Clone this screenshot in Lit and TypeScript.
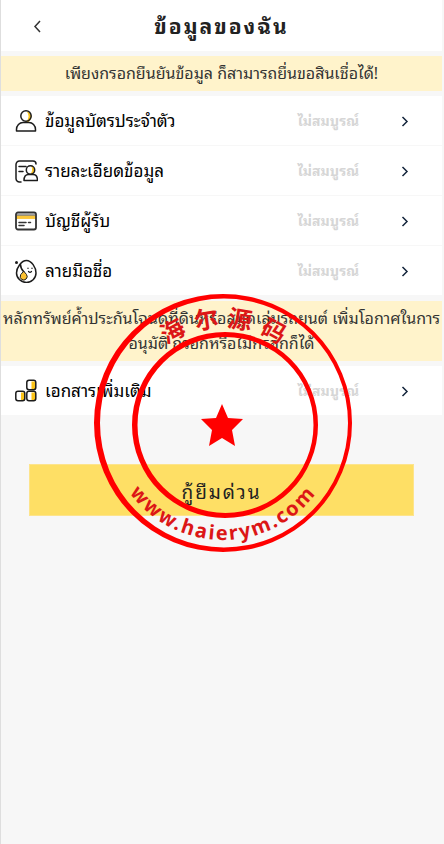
import { LitElement, html, svg, css } from "lit";
import { customElement } from "lit/decorators.js";

const icons: Record<string, unknown> = {
  person: svg`
    <path d="M13 2.500a5 5 0 0 1-2.500 9.500c3.500-1.500 4.500-6 2.500-9.500z" fill="#fcc419" stroke="#fcc419" stroke-width="1"/>
    <circle cx="11" cy="6" r="5.200"/>
    <path d="M1.500 21v-1.500c0-4 3-7 6.500-7h6c3.500 0 6.500 3 6.500 7v1.500z"/>`,
  details: svg`
    <path d="M6 22H4.500A3.500 3.500 0 0 1 1 18.500v-14A3.500 3.500 0 0 1 4.500 1H18a3 3 0 0 1 3 3"/>
    <path d="M4 6.500h7M4 11.500h4"/>
    <path d="M17 6.500a4 4 0 0 1-1 7.500c2-2.500 2-5 1-7.500z" fill="#fcc419" stroke="#fcc419" stroke-width="1"/>
    <circle cx="15.500" cy="10" r="4.200"/>
    <path d="M9 20.500c0-4 2-6 4.500-6h4.500c2.500 0 4.500 2 4.500 6z"/>`,
  card: svg`
    <path d="M1 7.200h20" stroke="#fcc73a" stroke-width="3.500" stroke-linecap="butt"/>
    <rect x="1" y="2.500" width="20" height="17" rx="2" stroke="#333" stroke-width="1.800"/>
    <path d="M2 5h18" stroke="#444" stroke-width="1"/>
    <path d="M4 12.500h7M13.500 12.500h2M4 15.500h5" stroke="#333"/>`,
  egg: svg`
    <path d="M11.500 .5c5 0 9.500 7 9.500 12.500S16.500 22.500 11.500 22.500 1.500 18.500 1.500 13 6.500 .5 11.500 .5z"/>
    <circle cx="1.500" cy="2.500" r="1.500" fill="#1c1c1c" stroke="none"/>
    <path d="M5.500 4.500c0 3 1 5 3.500 7.500"/>
    <path d="M9 11.500l2.500 3a3.500 3.500 0 1 1-6 .5z" fill="#fcc12f" stroke-width="1"/>
    <path d="M13 8v.5M17 8v.5M13.500 11.500q1.500 1.500 3 0" stroke-width="1.200"/>`,
  blocks: svg`
    <path d="M16.500 1.500h3.500v8h-3.500zM6 12.500h3.500v8H6zM16.500 12.500h3.500v8h-3.500z" fill="#fcc419" stroke="none"/>
    <rect x="11.800" y=".3" width="9" height="9.500" rx="2.200"/>
    <rect x=".8" y="11.300" width="9" height="9.500" rx="2.200"/>
    <rect x="11.800" y="11.300" width="9" height="9.500" rx="2.200"/>`,
};

@customElement("list-row")
class ListRow extends LitElement {
  static properties = { icon: {}, label: {}, status: {} };
  declare icon: string;
  declare label: string;
  declare status: string;

  static styles = css`
    :host { display: block; }
    .row {
      display: grid;
      grid-template-columns: 24px 1fr auto 16px;
      align-items: center;
      box-sizing: border-box;
      height: 50px;
      padding: 0 30px 0 13px;
      border-bottom: 1px solid #f7f7f7;
      color: #000;
      text-decoration: none;
      background: #fff;
    }
    .icon { width: 24px; height: 24px; }
    .label { padding-left: 7px; font-size: 17px; line-height: 24px; }
    .status {
      margin-right: 37px;
      font-size: 14px;
      line-height: 24px;
      font-weight: 700;
      color: #d6d6d6;
    }
    .chevron { width: 16px; height: 16px; }
  `;

  render() {
    return html`<a class="row" href="#">
      <svg class="icon" viewBox="-1 -1 24 24" fill="none" stroke="#1c1c1c" stroke-width="1.500"
        stroke-linecap="round" stroke-linejoin="round" aria-hidden="true">${icons[this.icon]}</svg>
      <span class="label">${this.label}</span>
      <span class="status">${this.status}</span>
      <svg class="chevron" viewBox="0 0 16 16" fill="none" stroke="#14253c" stroke-width="1.500" aria-hidden="true">
        <path d="M6.500 4l4.500 4.500-4.500 4.500"/>
      </svg>
    </a>`;
  }
}

@customElement("round-stamp")
class RoundStamp extends LitElement {
  static styles = css`
    :host { display: block; }
    .seal { display: block; width: 258px; height: 260px; }
    .mark {
      font-family: "Noto Sans", "Noto Sans CJK SC", sans-serif;
      font-weight: 700;
      fill: #dc1616;
      text-anchor: middle;
    }
    .han { font-family: "Noto Sans CJK SC", sans-serif; font-size: 24px; }
    .site { font-size: 20px; letter-spacing: 2px; }
  `;

  render() {
    const top: [string, number][] = [["海", -28], ["尔", -9], ["源", 9], ["码", 28]];
    return html`<svg class="seal" viewBox="0 0 258 260" role="img" aria-label="海尔源码 www.haierym.com">
      <g fill="#f00" fill-rule="evenodd">
        <path d="M0 130a129 129 0 0 1 258 0a129 129 0 0 1-258 0zM6 130a124 124.500 0 0 0 248 0a124 124.500 0 0 0-248 0z"/>
        <path d="M38 132a93 93 0 0 1 186 0a93 93 0 0 1-186 0zM43.500 132a88 88 0 0 0 176 0a88 88 0 0 0-176 0z"/>
        <path d="M128 111l6 14 15 1-11 11 3 16-13-8-13 8 3-16-11-11 15-1z"/>
      </g>
      ${top.map(([ch, angle]) => svg`<text class="mark han" x="129" y="34"
        transform=${`rotate(${angle} 129 133)`}>${ch}</text>`)}
      <path id="arc" d="M13 131a116 116 0 0 0 232 0" fill="none"/>
      <text class="mark site"><textPath href="#arc" startOffset="50%">www.haierym.com</textPath></text>
    </svg>`;
  }
}

@customElement("app-root")
class AppRoot extends LitElement {
  static styles = css`
    :host {
      display: block;
      position: relative;
      box-sizing: border-box;
      min-height: 100vh;
      padding-right: 2px;
      border-left: 1px solid #dedede;
      background: #f7f7f7;
      font-family: "Noto Sans", "Noto Sans Thai Looped", "Loma", "Waree", sans-serif;
      color: #333;
    }
    .bar {
      display: grid;
      grid-template-columns: 72px 1fr 72px;
      align-items: center;
      height: 51px;
      background: #fff;
    }
    .back {
      justify-self: center;
      display: grid;
      padding: 8px;
      border: 0;
      background: none;
    }
    .back svg { width: 16px; height: 16px; }
    .title {
      margin: 0;
      text-align: center;
      font-size: 21px;
      line-height: 28px;
      font-weight: 700;
      letter-spacing: 2px;
      color: #222;
    }
    .note {
      margin: 5px 0;
      padding: 5px 0;
      text-align: center;
      font-size: 16px;
      line-height: 25px;
      background: #fff3cb;
    }
    .apply {
      display: block;
      width: calc(100% - 56px);
      height: 52px;
      margin: 48px 28px 0;
      border: 1px solid #fde48c;
      background: #fedf65;
      font: inherit;
      font-size: 19px;
      letter-spacing: 2px;
      color: #222;
    }
    .stamp {
      position: absolute;
      top: 293px;
      left: calc(50% - 129px);
      pointer-events: none;
    }
  `;

  render() {
    const rows = [
      ["person", "ข้อมูลบัตรประจำตัว"],
      ["details", "รายละเอียดข้อมูล"],
      ["card", "บัญชีผู้รับ"],
      ["egg", "ลายมือชื่อ"],
    ];
    const status = "ไม่สมบูรณ์";
    return html`
      <header class="bar">
        <button class="back" aria-label="ย้อนกลับ">
          <svg viewBox="0 0 16 16" fill="none" stroke="#333" stroke-width="1.500"><path d="M11 3L6 8.500l5 5.500"/></svg>
        </button>
        <h1 class="title">ข้อมูลของฉัน</h1>
      </header>
      <p class="note">เพียงกรอกยืนยันข้อมูล ก็สามารถยื่นขอสินเชื่อได้!</p>
      <nav class="list">
        ${rows.map(([icon, label]) => html`<list-row .icon=${icon} .label=${label} .status=${status}></list-row>`)}
      </nav>
      <p class="note">หลักทรัพย์ค้ำประกันโฉนดที่ดินหรือสมุดเล่มรถยนต์ เพิ่มโอกาศในการอนุมัติ กรอกหรือไม่กรอกก็ได้</p>
      <nav class="list">
        <list-row .icon=${"blocks"} .label=${"เอกสารเพิ่มเติม"} .status=${status}></list-row>
      </nav>
      <button class="apply">กู้ยืมด่วน</button>
      <round-stamp class="stamp"></round-stamp>
    `;
  }
}
